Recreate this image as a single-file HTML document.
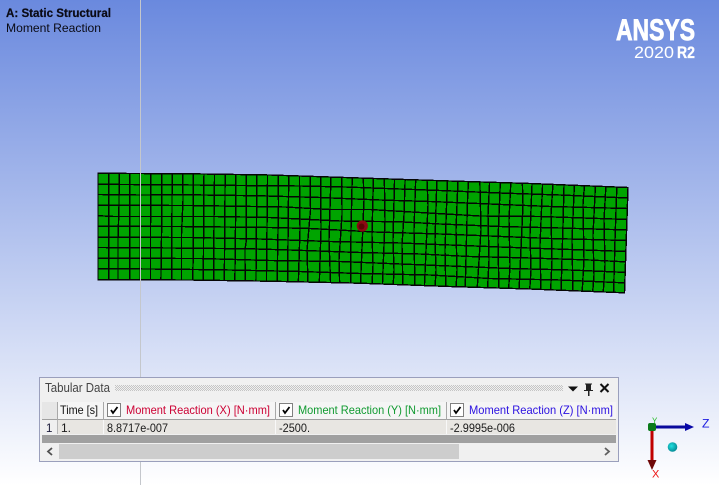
<!DOCTYPE html>
<html>
<head>
<meta charset="utf-8">
<style>
html,body{margin:0;padding:0;width:719px;height:485px;overflow:hidden;background:#fff}
svg{display:block}
text{font-family:"Liberation Sans",sans-serif}
</style>
</head>
<body>
<svg width="719" height="485" viewBox="0 0 719 485" xmlns="http://www.w3.org/2000/svg">
<defs>
<linearGradient id="bg" x1="0" y1="0" x2="0" y2="1">
<stop offset="0" stop-color="#6a89de"/>
<stop offset="1" stop-color="#ffffff"/>
</linearGradient>
<radialGradient id="cy" cx="0.4" cy="0.4" r="0.7">
<stop offset="0" stop-color="#22e0e0"/>
<stop offset="1" stop-color="#007f8c"/>
</radialGradient>
<pattern id="dots" width="2" height="2" patternUnits="userSpaceOnUse">
<rect width="1" height="1" fill="#c4c4c4"/>
<rect x="1" y="1" width="1" height="1" fill="#c4c4c4"/>
</pattern>
<clipPath id="mesh"><path d="M98 173.300L190 173.800 270 175 360 178 450 181 530 183.500 628 187.500 624.500 292.800 530 289 450 286.500 360 283.200 270 281.200 190 280 98 279.700Z"/></clipPath>
</defs>
<rect width="719" height="485" fill="url(#bg)"/>

<!-- mesh -->
<path d="M98 173.300L190 173.800 270 175 360 178 450 181 530 183.500 628 187.500 624.500 292.800 530 289 450 286.500 360 283.200 270 281.200 190 280 98 279.700Z" fill="#00a400"/>
<g clip-path="url(#mesh)" fill="none" stroke="#050505" stroke-width="1.400" shape-rendering="crispEdges">
<path d="M98 184.300L195 185 240 185.500 300 186 345 187 400 189 440 190.500 500 193 560 195 628 198"/>
<path d="M98 194.500L140 195 190 194.800 260 195.800 320 197.500 380 200 430 201.500 490 204 550 206.500 628 208.500"/>
<path d="M98 205.300L190 205.500 285 207 330 209.500 370 209.500 420 212.500 480 216 540 216.500 628 219.500"/>
<path d="M98 215.700L114 216.500 215 216.500 270 217.500 340 221 400 221.800 440 224 500 226.500 560 228 628 230"/>
<path d="M98 226.300L180 226.500 270 227.500 310 228.500 375 232 440 234 490 236 550 238.500 628 240.500"/>
<path d="M98 237.300L190 237.500 260 239 330 241.500 400 243 450 245 500 247 570 249.500 628 251.500"/>
<path d="M98 247.500L170 248 250 248.800 290 250 360 252.500 420 254 470 256.500 530 258 590 260 628 262"/>
<path d="M98 258.300L200 258.500 270 260.500 340 261.500 400 264 450 266 510 268.500 570 270 628 272.500"/>
<path d="M98 268.700L150 269 220 269.800 300 271.500 360 273.500 430 275 490 278.500 560 280 628 283"/>
<path d="M108.600 170V296M119.200 170L119 205 118 240V296M129.800 170V296M140.400 170V296M151 170L150.500 230V296M161.600 170V230L160.700 296M172.200 170L171.500 296M182.800 170L183 200 181.500 235V296M193.400 170V250L192.200 296M204 170L203.200 296M214.600 170L214 220 213.700 296M225.200 170L224.200 296M235.800 170V200L234.700 296M246.400 170V240L245 250 245.200 296M257 170L255.800 296M267.600 170L266.300 296M278.200 170L278.500 205 276.800 296M288.800 170L287.400 296M299.400 170L300 230 297.900 296M310 170L310.500 210 307 250 308.400 296M320.600 170L321 230 318.900 296M331.200 170L329 240 331 296M341.800 170L342 215 339 260 340 296M352.400 170L351 230 350.500 296M363 170L364 200 360 296M373.600 170L372 235 373 265 371.500 296M384.200 170L385 220 382 296M394.800 170L393 240 394 270 392.600 296M405.400 170L404 215 402 245 403.100 296M416 170L414 230 415 296M426.600 170L428 205 424 296M437.200 170L435 240 436 270 434.600 296M447.800 170L445 250 446 296M458.400 170L456 230 457 270 455.700 296M469 170L467.500 200 465 296M479.600 170L481 230 476.700 296M490.200 170L488 215 489 260 487.200 296M500.800 170L498 240 499 296M511.400 170L509 220 510 265 508.300 296M522 170L523 205 518.800 296M532.600 170L530 235 531 270 529.300 296M543.200 170L540 245 541 296M553.800 170L551 215 552 260 550.400 296M564.400 170L563 225 560.900 296M575 170L572 240 573 296M585.600 170L583 205 584 260 581.900 296M596.200 170L593 235 594 275 592.400 296M606.800 170L604 220 605 265 603 296M617.400 170L615 240 613.500 296"/>
</g>
<path d="M98 173.300L190 173.800 270 175 360 178 450 181 530 183.500 628 187.500 624.500 292.800 530 289 450 286.500 360 283.200 270 281.200 190 280 98 279.700Z" fill="none" stroke="#050505" stroke-width="1.400" shape-rendering="crispEdges"/>

<!-- vertical guide line -->
<rect x="140" y="0" width="1" height="485" fill="#c4c7cc"/>

<!-- point marker -->
<circle cx="362.300" cy="226" r="5.600" fill="#8c0a14"/>
<circle cx="361.500" cy="226.500" r="3" fill="#5e0606"/>

<!-- top-left labels -->
<text x="6" y="17" font-size="11.500" font-weight="bold" fill="#0a0a14" stroke="#0a0a14" stroke-width="0.200" textLength="105" lengthAdjust="spacingAndGlyphs">A: Static Structural</text>
<text x="6" y="32" font-size="12" fill="#0a0a14" textLength="95" lengthAdjust="spacingAndGlyphs">Moment Reaction</text>

<!-- logo -->
<text x="616" y="40" font-size="30" font-weight="bold" fill="#ffffff" stroke="#ffffff" stroke-width="0.900" textLength="79" lengthAdjust="spacingAndGlyphs">ANSYS</text>
<text x="634" y="58" font-size="17" fill="#ffffff" textLength="40" lengthAdjust="spacingAndGlyphs">2020</text>
<text x="677" y="58" font-size="17" font-weight="bold" fill="#ffffff" stroke="#ffffff" stroke-width="0.300" textLength="18" lengthAdjust="spacingAndGlyphs">R2</text>

<!-- panel -->
<rect x="39.500" y="377.500" width="579" height="84" fill="#f0f0f0" stroke="#9a9fbc"/>
<text x="45" y="392" font-size="13" fill="#444444" textLength="65" lengthAdjust="spacingAndGlyphs">Tabular Data</text>
<rect x="115" y="385" width="448" height="6" fill="url(#dots)"/>
<path d="M568 386.500h10l-5 5z" fill="#111"/>
<path d="M585 384h7M586.500 384v6M590.500 384v6M584 390.500h9" stroke="#222" stroke-width="1" fill="none" shape-rendering="crispEdges"/>
<rect x="586" y="384" width="5" height="6" fill="#222"/>
<rect x="588" y="390" width="1.500" height="6" fill="#222"/>
<path d="M600.500 384l8 8M608.500 384l-8 8" stroke="#111" stroke-width="2" fill="none"/>

<!-- table header -->
<rect x="42" y="402" width="574" height="17" fill="#f5f5f5"/>
<rect x="42" y="402" width="15" height="17" fill="#e6e6e6"/>
<rect x="42" y="419" width="574" height="1" fill="#a0a0a0"/>
<rect x="57" y="402" width="1" height="18" fill="#a8a8a8"/>
<rect x="103" y="402" width="1" height="18" fill="#a8a8a8"/>
<rect x="275" y="402" width="1" height="18" fill="#a8a8a8"/>
<rect x="446" y="402" width="1" height="18" fill="#a8a8a8"/>

<text x="60" y="414" font-size="12" fill="#111" textLength="38" lengthAdjust="spacingAndGlyphs">Time [s]</text>

<rect x="107.500" y="403.500" width="13" height="13" fill="#fff" stroke="#808080"/>
<path d="M111 410l2 3 4.500-6" stroke="#000" stroke-width="1.800" fill="none"/>
<text x="126" y="414" font-size="12" fill="#cc0033" textLength="144" lengthAdjust="spacingAndGlyphs">Moment Reaction (X) [N·mm]</text>

<rect x="279.500" y="403.500" width="13" height="13" fill="#fff" stroke="#808080"/>
<path d="M283 410l2 3 4.500-6" stroke="#000" stroke-width="1.800" fill="none"/>
<text x="298" y="414" font-size="12" fill="#109a30" textLength="143" lengthAdjust="spacingAndGlyphs">Moment Reaction (Y) [N·mm]</text>

<rect x="450.500" y="403.500" width="13" height="13" fill="#fff" stroke="#808080"/>
<path d="M454 410l2 3 4.500-6" stroke="#000" stroke-width="1.800" fill="none"/>
<text x="469" y="414" font-size="12" fill="#2a10e0" textLength="144" lengthAdjust="spacingAndGlyphs">Moment Reaction (Z) [N·mm]</text>

<!-- table row -->
<rect x="42" y="420" width="574" height="14" fill="#e8e6e2"/>
<rect x="42" y="420" width="15" height="14" fill="#f0f0f0"/>
<rect x="57" y="420" width="1" height="14" fill="#b8b8b8"/>
<rect x="103" y="420" width="1" height="14" fill="#f8f8f8"/>
<rect x="275" y="420" width="1" height="14" fill="#f8f8f8"/>
<rect x="446" y="420" width="1" height="14" fill="#f8f8f8"/>
<text x="46" y="432" font-size="11.500" fill="#1a1a3a">1</text>
<text x="61" y="432" font-size="12" fill="#1a1a1a">1.</text>
<text x="107" y="432" font-size="12" fill="#1a1a1a" textLength="61" lengthAdjust="spacingAndGlyphs">8.8717e-007</text>
<text x="279" y="432" font-size="12" fill="#1a1a1a" textLength="31" lengthAdjust="spacingAndGlyphs">-2500.</text>
<text x="450" y="432" font-size="12" fill="#1a1a1a" textLength="65" lengthAdjust="spacingAndGlyphs">-2.9995e-006</text>

<!-- grey bar -->
<rect x="42" y="435" width="574" height="8" fill="#a0a0a0"/>

<!-- scrollbar -->
<rect x="42" y="444" width="574" height="15" fill="#f0f0f0"/>
<rect x="59" y="444" width="400" height="15" fill="#cdcdcd"/>
<path d="M52 448l-4 3.500 4 3.500" stroke="#505050" stroke-width="1.800" fill="none"/>
<path d="M605 448l4 3.500-4 3.500" stroke="#606060" stroke-width="1.800" fill="none"/>

<!-- triad -->
<rect x="652" y="425.500" width="34" height="3" fill="#0a0a9c"/>
<path d="M685 423l9 4-9 4z" fill="#0808a8"/>
<rect x="650.500" y="427" width="3" height="34" fill="#c00000"/>
<path d="M647.500 460h9l-4.500 10z" fill="#6e0808"/>
<rect x="648" y="423" width="8" height="8" rx="2" fill="#0a7a1a"/>
<circle cx="672.500" cy="447" r="4.800" fill="url(#cy)"/>
<text x="652" y="423.500" font-size="8" fill="#22bb22">Y</text>
<text x="702" y="427.500" font-size="12" fill="#1a1ae0" textLength="7.500" lengthAdjust="spacingAndGlyphs">Z</text>
<text x="652" y="477.500" font-size="11" fill="#ee1111">X</text>
</svg>
</body>
</html>
